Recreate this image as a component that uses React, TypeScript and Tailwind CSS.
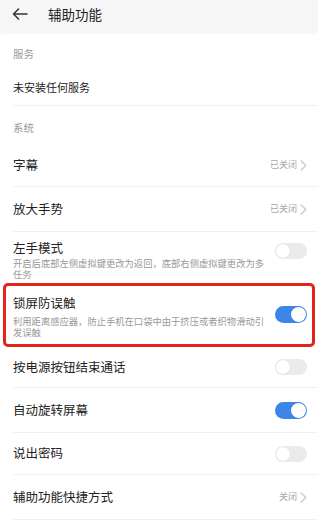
import React from 'react';

const Chevron = () => (
  <svg width="7" height="11" viewBox="0 0 7 11" fill="none" className="shrink-0">
    <path d="M1 0.8 L5.8 5.5 L1 10.2" stroke="#c8c8c8" strokeWidth="1.2" strokeLinecap="round" strokeLinejoin="round" />
  </svg>
);

const Toggle = ({ on }: { on: boolean }) =>
  on ? (
    <div className="w-[32px] h-[17px] rounded-full bg-[#3b86e6] flex items-center justify-end pr-[1px] shrink-0">
      <div className="w-[15px] h-[15px] rounded-full bg-white" />
    </div>
  ) : (
    <div className="w-[32px] h-[16px] rounded-full bg-[#ebebeb] flex items-center pl-[1px] shrink-0">
      <div className="w-[14px] h-[14px] rounded-full bg-white shadow-[0_0_1px_rgba(0,0,0,0.15)]" />
    </div>
  );

const Label = ({ text }: { text: string }) => (
  <div className="h-[38px] pt-[6px] flex items-center pl-[13px] text-[10.5px] text-[#9a9a9a]">{text}</div>
);

const LinkRow = ({ title, value, h }: { title: string; value: string; h: string }) => (
  <div className={`${h} ml-[13px] pr-[11px] flex items-center justify-between border-b border-[#f1f1f1]`}>
    <span className="text-[12.5px] text-[#222]">{title}</span>
    <div className="flex items-center gap-[3px]">
      <span className="text-[9px] text-[#a8a8a8]">{value}</span>
      <Chevron />
    </div>
  </div>
);

const ToggleRow = ({ title, on, h }: { title: string; on: boolean; h: string }) => (
  <div className={`${h} ml-[13px] pr-[11px] flex items-center justify-between border-b border-[#f1f1f1]`}>
    <span className="text-[12.5px] text-[#222]">{title}</span>
    <Toggle on={on} />
  </div>
);

export default function App() {
  return (
    <div
      className="w-[318px] h-[523px] bg-white overflow-hidden"
      style={{ fontFamily: '"Noto Sans CJK SC", "Noto Sans", sans-serif' }}
    >
      <div className="h-[32px] bg-[#f6f6f6] shadow-[0_1px_3px_rgba(0,0,0,0.05)] flex items-center pl-[12px] pb-[4px]">
        <svg width="16" height="12" viewBox="0 0 16 12" fill="none">
          <path d="M15 6 H1.5 M6.5 1 L1.5 6 L6.5 11" stroke="#333" strokeWidth="1.5" strokeLinecap="round" strokeLinejoin="round" />
        </svg>
        <span className="ml-[20px] text-[13.5px] text-[#222]">辅助功能</span>
      </div>

      <Label text="服务" />
      <div className="h-[36px] ml-[13px] flex items-center border-b border-[#f1f1f1] text-[11px] text-[#222]">
        未安装任何服务
      </div>

      <Label text="系统" />
      <LinkRow title="字幕" value="已关闭" h="h-[43px]" />
      <LinkRow title="放大手势" value="已关闭" h="h-[45px]" />

      <div className="h-[51px] ml-[13px] pr-[11px] pt-[8px] flex items-start justify-between">
        <div className="w-[254px]">
          <div className="text-[12.5px] leading-[16px] text-[#222]">左手模式</div>
          <div className="mt-[2px] text-[9.3px] leading-[10.5px] text-[#999]">
            开启后底部左侧虚拟键更改为返回，底部右侧虚拟键更改为多任务
          </div>
        </div>
        <div className="mt-[3px]">
          <Toggle on={false} />
        </div>
      </div>

      <div className="h-[64px] mx-[3px] border-[3px] border-[#e1251b] rounded-[5px] pl-[7px] pr-[5px] pt-[9px] flex items-start justify-between">
        <div className="w-[254px]">
          <div className="text-[12.5px] leading-[16px] text-[#222]">锁屏防误触</div>
          <div className="mt-[5px] text-[9.3px] leading-[10.5px] text-[#999]">
            利用距离感应器，防止手机在口袋中由于挤压或者织物滑动引发误触
          </div>
        </div>
        <div className="mt-[11px]">
          <Toggle on={true} />
        </div>
      </div>

      <ToggleRow title="按电源按钮结束通话" on={false} h="h-[41px]" />
      <ToggleRow title="自动旋转屏幕" on={true} h="h-[45px]" />
      <ToggleRow title="说出密码" on={false} h="h-[42px]" />
      <LinkRow title="辅助功能快捷方式" value="关闭" h="h-[45px]" />
    </div>
  );
}
